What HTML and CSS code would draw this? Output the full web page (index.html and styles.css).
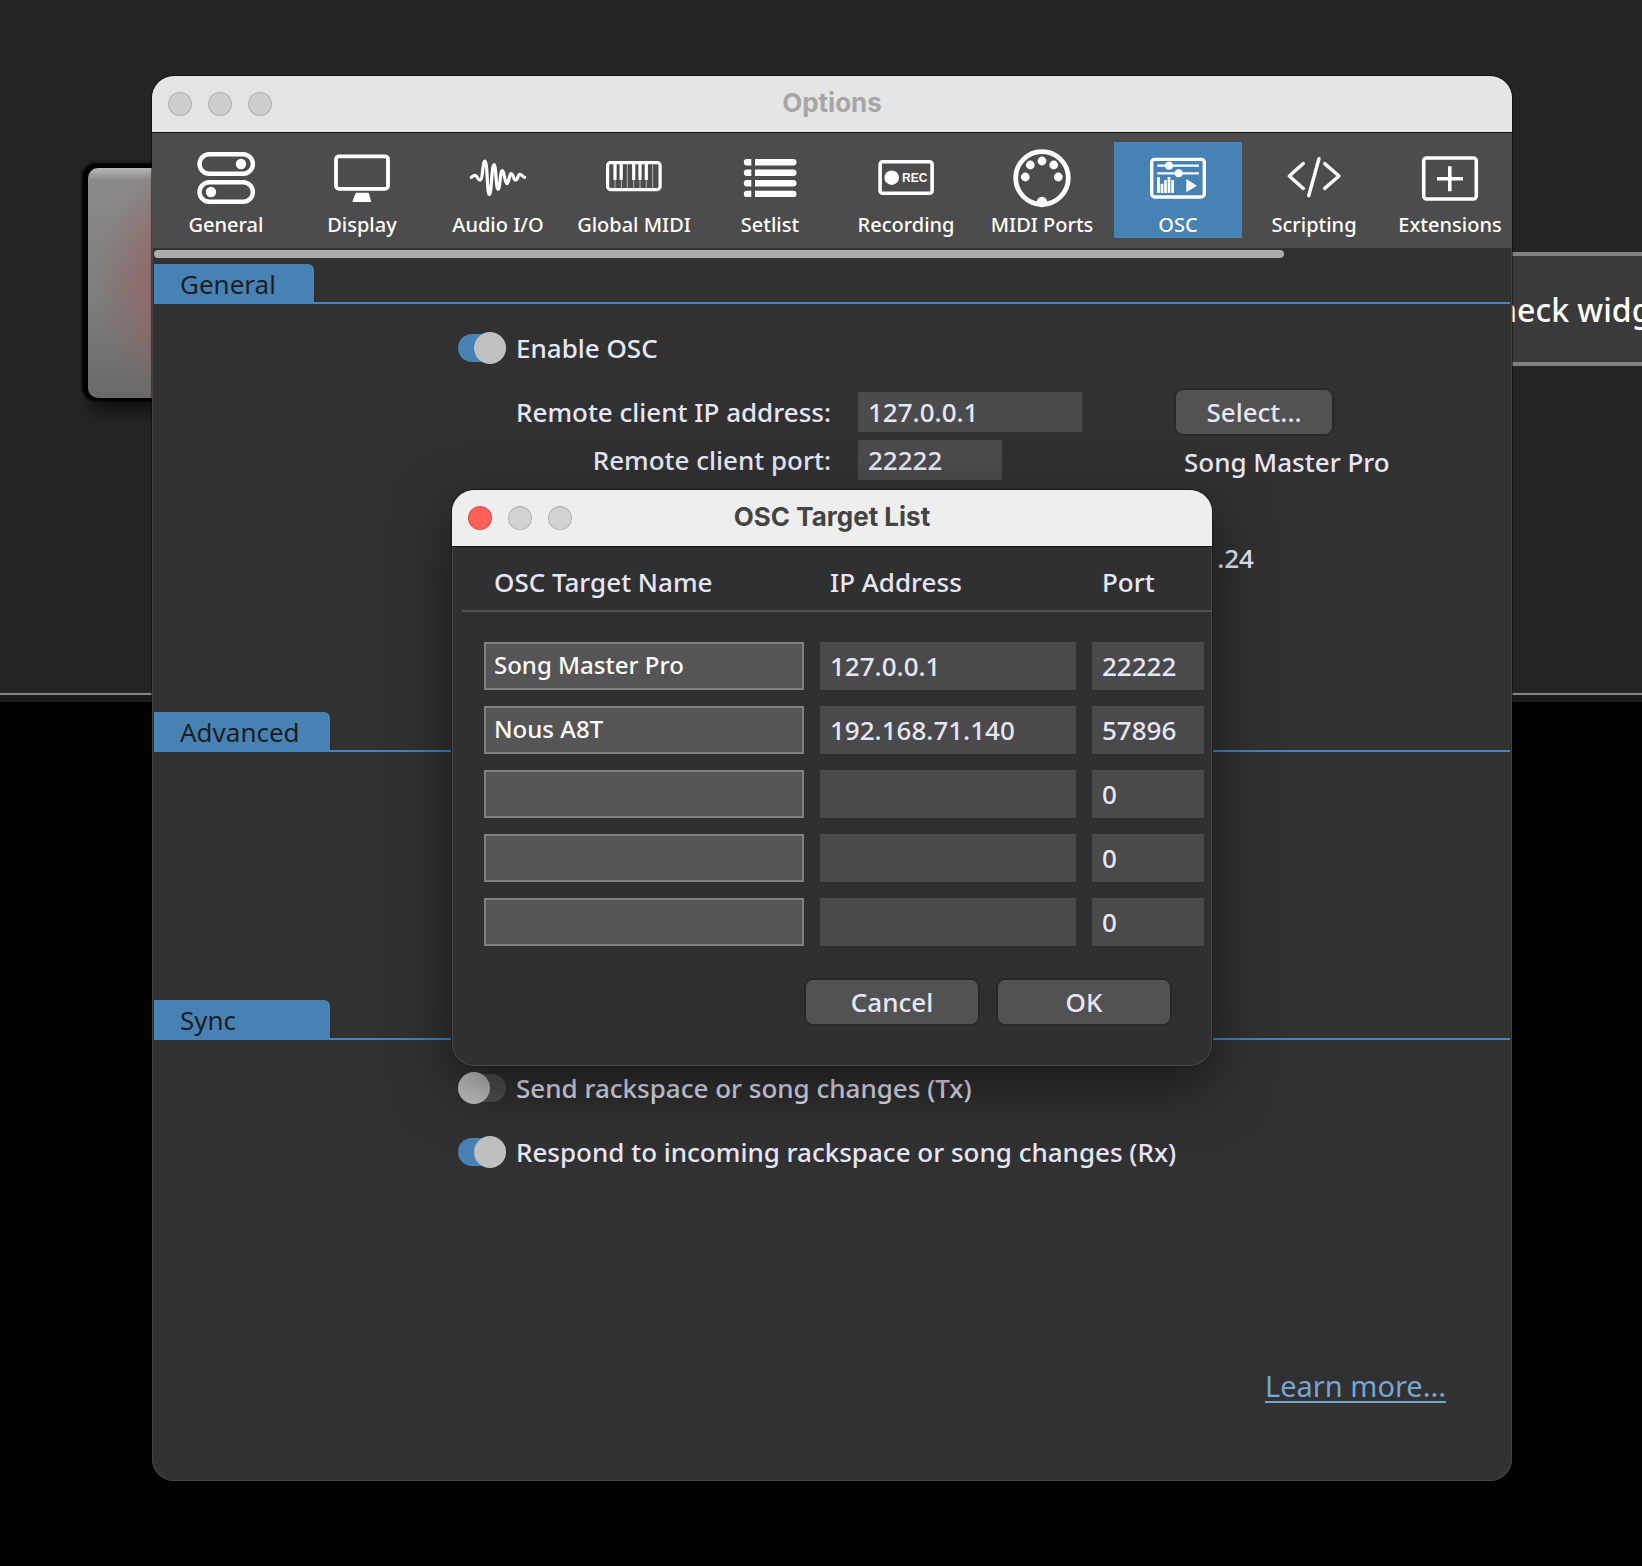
FILE: index.html
```html
<!DOCTYPE html>
<html lang="en">
<head>
<meta charset="utf-8">
<title>Options</title>
<link rel="stylesheet" href="styles.css">
</head>
<body>
<div class="backdrop">
  <div class="pad"></div>
  <div class="widget-label">heck widg</div>
</div>

<main class="options">
  <section class="window">
    <header class="titlebar titlebar-inactive">
      <div class="lights"><span class="light"></span><span class="light"></span><span class="light"></span></div>
      <h1 class="title">Options</h1>
    </header>

    <nav class="toolbar">
      <button class="tab" type="button">
        <svg class="icon" viewBox="0 0 64 64"><g fill="none" stroke="#fff" stroke-width="4.4"><rect x="5.5" y="10.2" width="53.4" height="19.6" rx="9.8"/><rect x="5.5" y="38.2" width="53.4" height="19.6" rx="9.8"/></g><g fill="#fff"><circle cx="47" cy="20" r="5.2"/><circle cx="17" cy="48" r="5.2"/></g></svg>
        General
      </button>
      <button class="tab" type="button">
        <svg class="icon" viewBox="0 0 64 64"><rect x="6" y="12.3" width="52" height="32.5" rx="3" fill="none" stroke="#fff" stroke-width="3.8"/><path d="M25.7 48.7h13L41.3 58h-19z" fill="#fff"/></svg>
        Display
      </button>
      <button class="tab" type="button">
        <svg class="icon" viewBox="0 0 64 64"><path d="M5.3 33.3C6.5 32 7.5 31.3 9 31.3C11.5 31.3 11.5 36 14 36C17 36 16.5 17 19 17C21.5 17 21 50.7 23.3 50.7C25.7 50.7 25.5 20.7 28 20.7C30.3 20.7 29.8 45.3 32 45.3C34.3 45.3 34 26.7 36.3 26.7C38.8 26.7 38.5 39.7 41 39.7C43.2 39.7 43 29.7 45 29.7C47.4 29.7 47.3 36 49.7 36C51.9 36 51.8 30.3 54 30.3C56 30.3 56.5 33.3 58.7 33.3" fill="none" stroke="#fff" stroke-width="3.2" stroke-linecap="round"/></svg>
        Audio I/O
      </button>
      <button class="tab" type="button">
        <svg class="icon" viewBox="0 0 64 64"><rect x="5.6" y="18.6" width="52.5" height="27" rx="3" fill="none" stroke="#fff" stroke-width="3.2"/><path d="M13 18v28M19.3 18v28M25.3 18v28M31.7 18v28M38 18v28M44.3 18v28M50.7 18v28" stroke="#fff" stroke-width="1" opacity=".6"/><path d="M13 18v18M19.2 18v18M31.7 18v18M38 18v18M44.3 18v18" stroke="#fff" stroke-width="3.2"/></svg>
        Global MIDI
      </button>
      <button class="tab" type="button">
        <svg class="icon" viewBox="0 0 64 64"><g fill="#fff"><path id="row" d="M13.3 15v6.4H9a3.2 3.2 0 0 1 0-6.4zM17 15h38.3a3.2 3.2 0 0 1 0 6.4H17z"/><use href="#row" y="10.6"/><use href="#row" y="21.1"/><use href="#row" y="31.7"/></g></svg>
        Setlist
      </button>
      <button class="tab" type="button">
        <svg class="icon" viewBox="0 0 64 64"><rect x="6.1" y="17.8" width="52" height="31.5" rx="2.5" fill="none" stroke="#fff" stroke-width="3.6"/><circle cx="17.7" cy="33.7" r="7.3" fill="#fff"/><text class="rec" x="28" y="38">REC</text></svg>
        Recording
      </button>
      <button class="tab" type="button">
        <svg class="icon" viewBox="0 0 64 64"><circle cx="32" cy="34" r="26.3" fill="none" stroke="#fff" stroke-width="4.8"/><g fill="#fff"><circle cx="15.3" cy="33" r="4.4"/><circle cx="20.3" cy="21" r="4.4"/><circle cx="32" cy="17" r="4.4"/><circle cx="43.7" cy="21" r="4.4"/><circle cx="48.3" cy="33" r="4.4"/><circle cx="32" cy="58" r="5.2"/></g></svg>
        MIDI Ports
      </button>
      <button class="tab tab-active" type="button">
        <svg class="icon" viewBox="0 0 64 64"><g fill="none" stroke="#fff"><rect x="5.7" y="15.4" width="52.6" height="37.6" rx="3" stroke-width="3.4"/><path d="M11.3 21.7H53M11.3 29.3H53" stroke-width="2.2"/><path d="M12.5 33v16M16 39.7V49M19.5 36v13M23 33v16M26.6 36v13" stroke-width="2.7"/></g><g fill="#fff"><circle cx="23" cy="21.7" r="4"/><circle cx="32.7" cy="29.3" r="4"/><path d="M40.3 35v13.3L51 41.7z"/></g></svg>
        OSC
      </button>
      <button class="tab" type="button">
        <svg class="icon" viewBox="0 0 64 64"><path d="M21.3 19.6L7.3 32l14 12.4M37 14.7L26.7 51.7M42.7 19.6L57 32 42.7 44.4" fill="none" stroke="#fff" stroke-width="3.4" stroke-linecap="round" stroke-linejoin="round"/></svg>
        Scripting
      </button>
      <button class="tab" type="button">
        <svg class="icon" viewBox="0 0 64 64"><g fill="none" stroke="#fff" stroke-width="3.6"><rect x="5.7" y="14" width="52.6" height="41" rx="3"/><path d="M19 34.7h26M31.8 22.3v25"/></g></svg>
        Extensions
      </button>
    </nav>
    <div class="scroll-track"><div class="scroll-thumb"></div></div>

    <section class="group group-general">
      <h2 class="group-head"><span class="group-name">General</span></h2>
      <label class="switch-row"><input class="switch" type="checkbox" checked>Enable OSC</label>
      <div class="form">
        <label class="form-label" for="client-ip">Remote client IP address:</label>
        <input class="field field-ip" id="client-ip" type="text" value="127.0.0.1">
        <button class="button" type="button">Select...</button>
        <label class="form-label" for="client-port">Remote client port:</label>
        <input class="field field-port" id="client-port" type="text" value="22222">
        <span class="form-note">Song Master Pro</span>
      </div>
      <div class="local-ip">.24</div>
    </section>

    <section class="group group-advanced">
      <h2 class="group-head"><span class="group-name group-name-wide">Advanced</span></h2>
    </section>

    <section class="group group-sync">
      <h2 class="group-head"><span class="group-name group-name-wide">Sync</span></h2>
      <label class="switch-row"><input class="switch" type="checkbox">Send rackspace or song changes (Tx)</label>
      <label class="switch-row"><input class="switch" type="checkbox" checked>Respond to incoming rackspace or song changes (Rx)</label>
    </section>

    <footer class="foot"><a class="more" href="#">Learn more...</a></footer>
  </section>

  <section class="dialog" role="dialog" aria-labelledby="dialog-title">
    <header class="titlebar">
      <div class="lights"><span class="light light-close"></span><span class="light"></span><span class="light"></span></div>
      <h2 class="title" id="dialog-title">OSC Target List</h2>
    </header>
    <table class="targets">
      <thead>
        <tr><th class="col-name">OSC Target Name</th><th class="col-ip">IP Address</th><th class="col-port">Port</th></tr>
      </thead>
      <tbody>
        <tr><td><input class="cell cell-name" type="text" aria-label="Name 1" value="Song Master Pro"></td><td><input class="cell" type="text" aria-label="IP 1" value="127.0.0.1"></td><td><input class="cell" type="text" aria-label="Port 1" value="22222"></td></tr>
        <tr><td><input class="cell cell-name" type="text" aria-label="Name 2" value="Nous A8T"></td><td><input class="cell" type="text" aria-label="IP 2" value="192.168.71.140"></td><td><input class="cell" type="text" aria-label="Port 2" value="57896"></td></tr>
        <tr><td><input class="cell cell-name" type="text" aria-label="Name 3"></td><td><input class="cell" type="text" aria-label="IP 3"></td><td><input class="cell" type="text" aria-label="Port 3" value="0"></td></tr>
        <tr><td><input class="cell cell-name" type="text" aria-label="Name 4"></td><td><input class="cell" type="text" aria-label="IP 4"></td><td><input class="cell" type="text" aria-label="Port 4" value="0"></td></tr>
        <tr><td><input class="cell cell-name" type="text" aria-label="Name 5"></td><td><input class="cell" type="text" aria-label="IP 5"></td><td><input class="cell" type="text" aria-label="Port 5" value="0"></td></tr>
      </tbody>
    </table>
    <footer class="actions">
      <button class="button button-wide" type="button">Cancel</button>
      <button class="button button-wide" type="button">OK</button>
    </footer>
  </section>
</main>
</body>
</html>
```
FILE: styles.css
```css
:root {
  --accent: #4682b4;
  --text: #e6e6fa;
}

* {
  box-sizing: border-box;
}

body {
  margin: 0;
  min-height: 100vh;
  overflow-x: hidden;
  background: #000;
  color: var(--text);
  font-family: "Noto Sans", "Open Sans", sans-serif;
  font-size: 26px;
  font-weight: 500;
  line-height: 32px;
}

button,
input {
  margin: 0;
  font: inherit;
  color: inherit;
}

/* Rack panel behind the windows */
.backdrop {
  position: absolute;
  top: 0;
  left: 0;
  right: 0;
  height: 702px;
  overflow: hidden;
  background: linear-gradient(#242424 693px, #858585 693px, #858585 695px, #1c1c1c 695px);
}

.pad {
  position: absolute;
  top: 168px;
  left: 88px;
  width: 230px;
  height: 230px;
  border-radius: 10px;
  background:
    radial-gradient(ellipse 106px 130px at 50% 50%, #b05050 0, rgba(160, 85, 85, 0.55) 45%, rgba(130, 110, 110, 0) 100%),
    linear-gradient(#b8b8b8 0, #8a8a8a 12px, #7c7c7c 60%, #696969 100%);
  box-shadow: -2px -1px 2px 4px #000, 4px 10px 16px 2px rgba(0, 0, 0, 0.6);
}

.widget-label {
  position: absolute;
  top: 252px;
  right: 0;
  width: 145px;
  height: 114px;
  border: solid #808080;
  border-width: 4px 0;
  background: #3a3a3a;
  color: #fff;
  font-size: 32px;
  line-height: 108px;
  white-space: nowrap;
}

/* Window frames */
.options {
  position: relative;
  margin: 76px 130px 0 152px;
}

.window,
.dialog {
  overflow: hidden;
  border-radius: 22px;
}

.window {
  background: #313131;
  box-shadow: inset 0 0 0 1px #444, 0 0 1px 1px rgba(0, 0, 0, 0.5);
}

.titlebar {
  display: grid;
  grid-template-columns: 1fr auto 1fr;
  align-items: center;
  height: 57px;
  padding: 0 16px;
  border-bottom: 1px solid #111;
  background: #eee;
  color: #444;
}

.titlebar-inactive {
  background: #e5e5e5;
  color: #a6a6a6;
}

.lights {
  display: flex;
  gap: 16px;
}

.light {
  width: 24px;
  height: 24px;
  border: 1px solid rgba(0, 0, 0, 0.14);
  border-radius: 50%;
  background: #cdcdcd;
}

.light-close {
  background: #ff5f57;
}

.title {
  margin: 0;
  padding-bottom: 2px;
  font-family: Inter, sans-serif;
  font-size: 26px;
  font-weight: 700;
}

/* Toolbar */
.toolbar {
  display: flex;
  gap: 8px;
  height: 115px;
  padding: 9px 0 0 10px;
  overflow: hidden;
  background: #4c4c4c;
}

.tab {
  display: flex;
  flex: none;
  flex-direction: column;
  align-items: center;
  width: 128px;
  height: 96px;
  padding: 2px 0 0;
  border: 0;
  background: none;
  color: #fff;
  font-size: 20px;
  line-height: 34px;
  white-space: nowrap;
}

.tab-active {
  background: var(--accent);
}

.icon {
  flex: none;
  width: 64px;
  height: 64px;
}

.rec {
  fill: #fff;
  font: bold 12px "Liberation Sans", sans-serif;
}

.scroll-track {
  padding: 2px;
}

.scroll-thumb {
  width: calc(100% * 5 / 6);
  height: 8px;
  border-radius: 4px;
  background: #ababab;
}

/* Settings groups */
.group {
  padding: 0 2px;
}

.group-general {
  min-height: 452px;
  padding-top: 4px;
}

.group-advanced {
  min-height: 288px;
}

.group-head {
  display: flex;
  margin: 0;
  border-bottom: 2px solid var(--accent);
  font-size: 26px;
  font-weight: 400;
}

.group-name {
  width: 160px;
  height: 38px;
  padding: 4px 26px 2px;
  border-radius: 0 6px 0 0;
  background: var(--accent);
  color: #1e1e1e;
}

.group-name-wide {
  width: 176px;
}

.switch-row {
  display: flex;
  align-items: center;
  gap: 10px;
  height: 32px;
  margin: 32px 0 0 304px;
}

.group-general .switch-row {
  margin-top: 28px;
}

.switch {
  display: flex;
  align-items: center;
  flex: none;
  width: 48px;
  height: 28px;
  appearance: none;
  border-radius: 14px;
  background: #505050;
}

.switch::before {
  content: "";
  width: 32px;
  height: 32px;
  flex: none;
  border-radius: 50%;
  background: #c0c0c0;
}

.switch:checked {
  justify-content: flex-end;
  background: var(--accent);
}

.form {
  display: grid;
  grid-template-columns: 677px 289px 1fr;
  column-gap: 27px;
  row-gap: 8px;
  align-items: center;
  margin-top: 28px;
}

.form-label {
  text-align: right;
}

.field {
  height: 40px;
  padding: 0 10px;
  border: 0;
  background: #4b4b4b;
}

.field-ip {
  width: 224px;
}

.field-port {
  width: 144px;
}

.form .button {
  margin: -4px 0;
}

.form-note {
  padding: 4px 0 0 10px;
}

.local-ip {
  padding: 62px 256px 0 0;
  text-align: right;
}

.button {
  width: 160px;
  height: 48px;
  padding: 0;
  border: 2px solid #292929;
  border-radius: 9px;
  background: #525252;
}

.button-wide {
  width: 176px;
}

.foot {
  padding: 202px 66px 78px;
  text-align: right;
}

.more {
  color: #76a5d2;
  font-size: 29px;
  font-weight: 400;
  text-decoration-thickness: 2px;
  text-underline-offset: 4px;
}

/* Target list */
.dialog {
  position: absolute;
  top: 414px;
  left: 0;
  right: 0;
  width: 760px;
  margin: 0 auto;
  background: #303030;
  box-shadow: 0 0 0 1px #1c1c1c, inset 0 0 0 1px #484848, 0 20px 60px rgba(0, 0, 0, 0.5);
}

.dialog .light {
  background-color: #d3d3d3;
}

.dialog .light-close {
  background-color: #ff5f57;
}

.targets {
  width: 750px;
  margin-left: 10px;
  border-collapse: collapse;
  table-layout: fixed;
}

.targets th {
  height: 64px;
  padding: 6px 0 0 10px;
  border-bottom: 2px solid #505050;
  font-weight: 500;
  text-align: left;
}

.targets .col-name {
  width: 358px;
  padding-left: 32px;
}

.col-ip {
  width: 272px;
}

.targets td {
  padding: 16px 16px 0 0;
}

.targets tr:first-child td {
  padding-top: 30px;
}

.targets td:first-child {
  padding-left: 22px;
}

.targets td:last-child {
  padding-right: 8px;
}

.cell {
  display: block;
  width: 100%;
  height: 48px;
  padding: 0 10px;
  border: 0;
  background: #4a4a4a;
}

.cell-name {
  padding: 0 8px 4px;
  border: 2px solid #808080;
  background: #555;
  color: #fff;
  font-size: 24px;
}

.actions {
  display: flex;
  justify-content: flex-end;
  gap: 16px;
  padding: 32px 40px 40px;
}
```
